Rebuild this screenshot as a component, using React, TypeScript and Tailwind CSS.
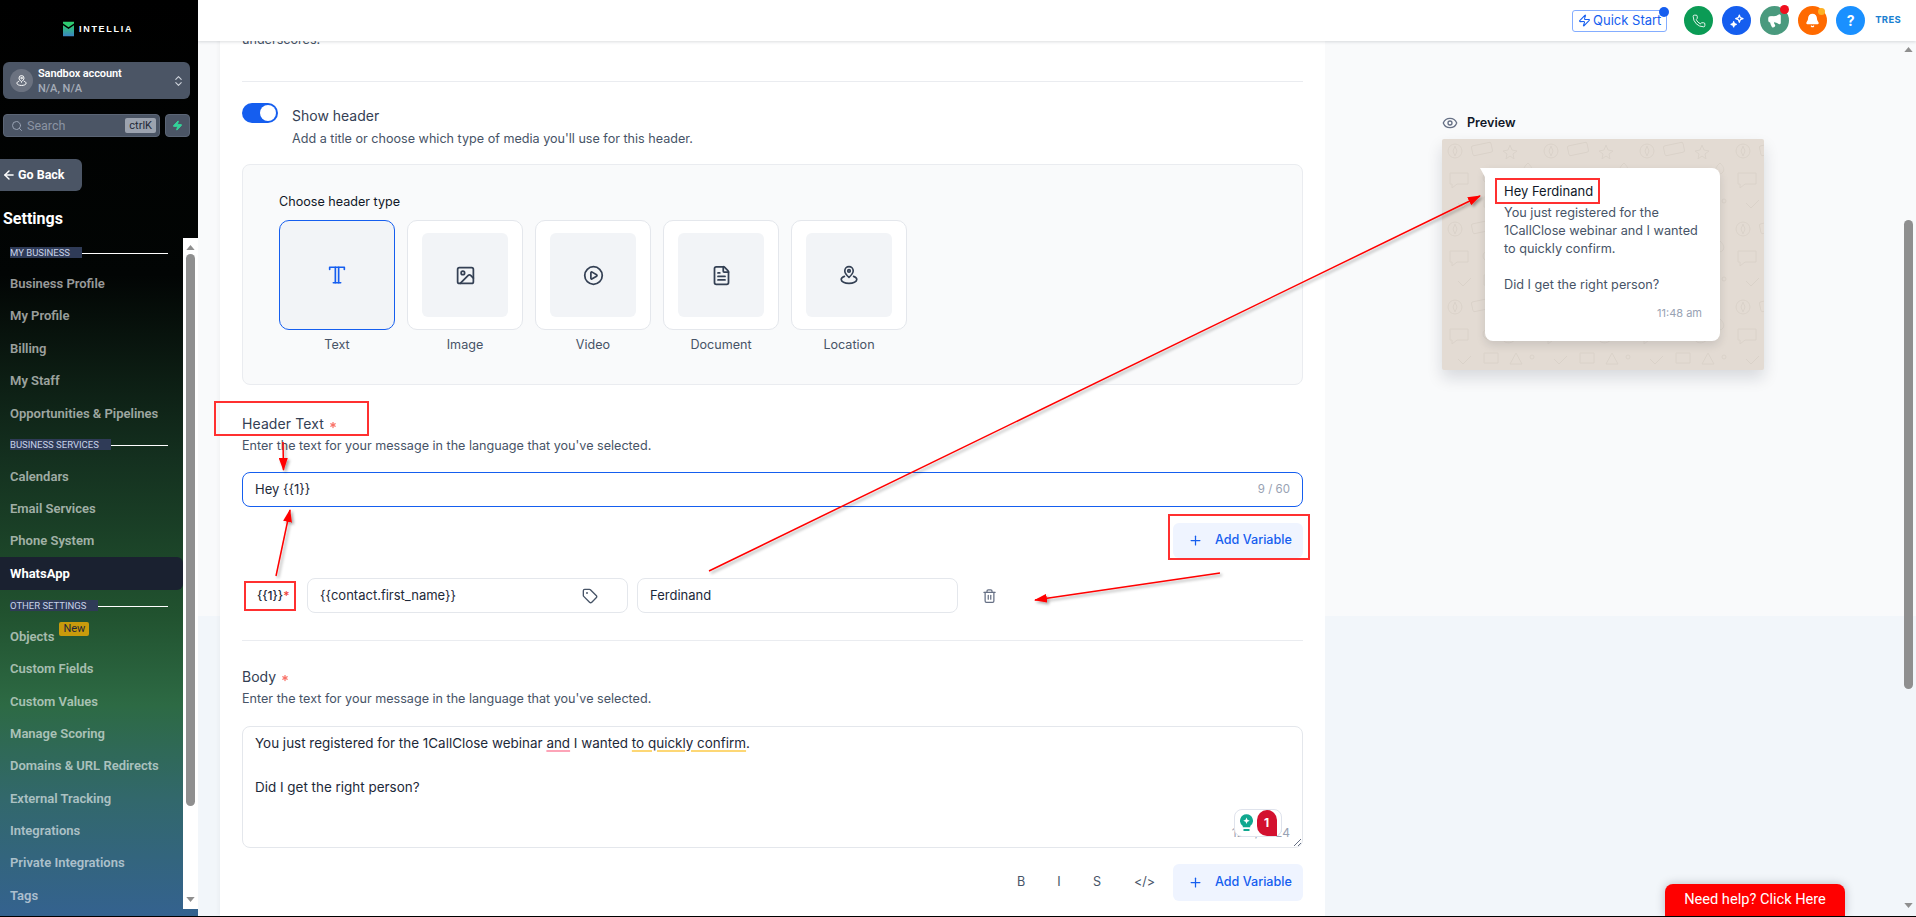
import { ArrowLeft, Asterisk, Bell, ChevronsUpDown, CirclePlay, Eye, FileText, Image, Megaphone, Phone, Plus, Search, Tag, Trash2, Zap } from "lucide-react";

type NavRow = { label: string; section?: boolean; active?: boolean; badge?: string };

const navRows: NavRow[] = [
  { label: "MY BUSINESS", section: true },
  { label: "Business Profile" },
  { label: "My Profile" },
  { label: "Billing" },
  { label: "My Staff" },
  { label: "Opportunities & Pipelines" },
  { label: "BUSINESS SERVICES", section: true },
  { label: "Calendars" },
  { label: "Email Services" },
  { label: "Phone System" },
  { label: "WhatsApp", active: true },
  { label: "OTHER SETTINGS", section: true },
  { label: "Objects", badge: "New" },
  { label: "Custom Fields" },
  { label: "Custom Values" },
  { label: "Manage Scoring" },
  { label: "Domains & URL Redirects" },
  { label: "External Tracking" },
  { label: "Integrations" },
  { label: "Private Integrations" },
  { label: "Tags" },
];

const PinIcon = ({ className }: { className?: string }) => (
  <svg viewBox="0 0 24 24" fill="none" stroke="currentColor" strokeWidth="1.8" strokeLinecap="round" strokeLinejoin="round" className={className}>
    <path d="M12 14.5c-2.6-2.3-4.6-4.4-4.6-7a4.6 4.6 0 0 1 9.2 0c0 2.6-2 4.7-4.6 7z" />
    <circle cx="12" cy="7.5" r="1.4" />
    <path d="M7 13.5c-2.3.8-3.5 2-3.5 3.5 0 2.4 3.8 4.2 8.5 4.2s8.5-1.8 8.5-4.2c0-1.500-1.200-2.700-3.500-3.500" />
  </svg>
);

const TypeIcon = ({ className }: { className?: string }) => (
  <svg viewBox="0 0 24 24" fill="none" stroke="currentColor" strokeWidth="1.8" strokeLinecap="round" strokeLinejoin="round" className={className}>
    <path d="M4 6V3.500h16V6" />
    <path d="M10.200 3.500v17M13.800 3.500v17" />
    <path d="M8 20.500h8" />
  </svg>
);

const TwinStars = ({ className }: { className?: string }) => (
  <svg viewBox="0 0 24 24" fill="none" stroke="currentColor" strokeWidth="1.800" strokeLinejoin="round" className={className}>
    <path d="M15.500 3l1.500 4 4 1.500-4 1.500-1.500 4-1.500-4-4-1.500 4-1.500z" />
    <path d="M7 13l1.100 2.900L11 17l-2.900 1.100L7 21l-1.100-2.900L3 17l2.900-1.100z" fill="currentColor" />
  </svg>
);

const ScrollArrow = ({ down }: { down?: boolean }) => (
  <svg viewBox="0 0 10 6" className="w-[9px] h-[5px]">
    <polygon points={down ? "0,0 10,0 5,6" : "5,0 10,6 0,6"} fill="#8f8f8f" />
  </svg>
);

const Sidebar = () => (
  <aside className="w-[198px] shrink-0 flex flex-col bg-[linear-gradient(180deg,#000000_0%,#020504_30%,#14301f_50%,#21522f_67%,#2d6a44_77%,#32686b_87%,#34628f_100%)] font-['Roboto',sans-serif]">
    <div className="h-[62px] pt-[21px] pl-[63px] flex items-start gap-[5px]">
      <svg viewBox="0 0 12 16" className="w-[11px] h-[16px]">
        <defs>
          <linearGradient id="logoFill" x1="0" y1="0" x2="0" y2="1">
            <stop offset="0" stopColor="#2ecc71" />
            <stop offset="1" stopColor="#3b82c4" />
          </linearGradient>
        </defs>
        <path d="M0 0h12v2L6 6 0 2z" fill="#2ecc71" />
        <path d="M0 4l6 4 6-4v12H0z" fill="url(#logoFill)" />
      </svg>
      <span className="text-[9px] leading-[16px] font-bold tracking-[1.7px] text-white font-['Liberation_Sans',sans-serif]">INTELLIA</span>
    </div>

    <div className="ml-[3px] mr-[8px] h-[37px] rounded-[6px] bg-[#4b5565] flex items-center pl-[7px] pr-[5px]">
      <div className="w-[23px] h-[23px] rounded-full bg-[#6b7280] flex items-center justify-center text-white">
        <PinIcon className="w-[13px] h-[13px]" />
      </div>
      <div className="ml-[5px] flex-1 leading-[15px]">
        <div className="text-[11px] font-semibold text-white tracking-[-0.1px]">Sandbox account</div>
        <div className="text-[11px] font-medium text-[#a5acb8]">N/A, N/A</div>
      </div>
      <ChevronsUpDown className="w-[13px] h-[16px] text-[#d0d5dd]" />
    </div>

    <div className="mt-[15px] mx-[3px] flex gap-[5px]">
      <div className="w-[157px] h-[23px] rounded-[4px] bg-[#4b5565] border border-[#5b6575] flex items-center pl-[7px] pr-[3px]">
        <Search className="w-[12px] h-[12px] text-[#98a2b3]" />
        <span className="ml-[4px] flex-1 text-[12.500px] leading-[19px] -mt-[1px] text-[#8b94a3]">Search</span>
        <span className="h-[15px] px-[4px] rounded-[2px] bg-[#9ca3af] text-[#1f2937] text-[11px] leading-[15px]">ctrlK</span>
      </div>
      <div className="w-[25px] h-[23px] rounded-[4px] bg-[#4b5565] border border-[#5b6575] flex items-center justify-center">
        <Zap className="w-[11px] h-[11px] text-[#34d399] fill-[#34d399]" />
      </div>
    </div>

    <div className="mt-[22px] w-[82px] h-[32px] rounded-r-[6px] bg-[#4b5565] flex items-center pl-[2px] gap-[2px] text-white text-[12.500px] font-bold">
      <ArrowLeft className="w-[14px] h-[14px]" strokeWidth={2.5} />
      Go Back
    </div>

    <div className="mt-[17px] pl-[3px] text-[16px] leading-[22px] font-bold text-white">Settings</div>

    <div className="mt-[7px] flex-1 min-h-0 flex pb-[7px]">
      <nav className="w-[183px] overflow-hidden">
        {navRows.map((row) =>
          row.section ? (
            <div key={row.label} className="h-[30.600px] flex items-center pl-[10px] pr-[15px]">
              <span className="h-[11px] pr-[12px] bg-[#2f3b57] text-[9.500px] leading-[11px] text-[#c7d2e8]">{row.label}</span>
              <span className="flex-1 h-px mt-[2px] bg-white" />
            </div>
          ) : (
            <div
              key={row.label}
              className={
                row.active
                  ? "h-[32.400px] flex items-center pl-[10px] rounded-r-[6px] bg-[#1a2130] text-[13px] font-bold text-white"
                  : "h-[32.400px] flex items-center pl-[10px] text-[13px] font-semibold text-white/60"
              }
            >
              {row.label}
              {row.badge && (
                <span className="ml-[5px] -mt-[14px] h-[14px] px-[4px] rounded-[2px] bg-[#c89b0c] text-[#1f2937] text-[11px] leading-[14px] font-normal">{row.badge}</span>
              )}
            </div>
          ),
        )}
      </nav>
      <div className="w-[15px] mt-[1px] bg-white flex flex-col items-center pt-[7px] pb-[7px]">
        <ScrollArrow />
        <div className="mt-[4px] w-[9px] h-[552px] rounded-full bg-[#8f8f8f]" />
        <div className="flex-1" />
        <ScrollArrow down />
      </div>
    </div>
  </aside>
);

const TopBar = () => (
  <header className="relative z-10 h-[41px] shrink-0 bg-white shadow-[0_1px_3px_rgba(16,24,40,0.15)] flex items-center justify-end pr-[15px]">
    <div className="relative w-[95px] h-[22px] mr-[17px] rounded-[3px] border border-[#84adff] flex items-center justify-center gap-[2px] text-[13px] text-[#155eef]">
      <Zap className="w-[13px] h-[13px]" />
      Quick Start
      <span className="absolute -top-[4px] -right-[3px] w-[10px] h-[10px] rounded-full bg-[#155eef]" />
    </div>
    <div className="flex items-center gap-[9px]">
      <div className="w-[29px] h-[29px] rounded-full bg-[#0b9b55] flex items-center justify-center text-white">
        <Phone className="w-[14px] h-[14px]" strokeWidth={1.5} />
      </div>
      <div className="w-[29px] h-[29px] rounded-full bg-[#155eef] flex items-center justify-center text-white">
        <TwinStars className="w-[16px] h-[16px]" />
      </div>
      <div className="relative w-[29px] h-[29px] rounded-full bg-[#4a9a7e] flex items-center justify-center text-white">
        <Megaphone className="w-[15px] h-[15px] fill-white" />
        <span className="absolute -top-px right-0 w-[9px] h-[9px] rounded-full bg-[#f00f1e]" />
      </div>
      <div className="relative w-[29px] h-[29px] rounded-full bg-[#ff6a00] flex items-center justify-center text-white">
        <Bell className="w-[15px] h-[15px] fill-white" />
        <span className="absolute top-[2px] right-[2px] w-[7px] h-[7px] rounded-full bg-[#fdb022]" />
      </div>
      <div className="w-[29px] h-[29px] rounded-full bg-[#1a90ff] flex items-center justify-center text-white text-[14px] font-bold">?</div>
    </div>
    <span className="ml-[10px] text-[9.500px] font-bold tracking-[0.3px] text-[#1a7fd1]">TRES</span>
  </header>
);

const AddVariable = ({ h }: { h: string }) => (
  <button className={`${h} w-[130px] rounded-[6px] bg-[#eff4ff] flex items-center pl-[15px] text-[12.600px] font-medium text-[#155eef]`}>
    <Plus className="w-[15px] h-[15px] mr-[12px]" />
    Add Variable
  </button>
);

const Required = () => <Asterisk className="inline-block ml-[4px] w-[10px] h-[10px] text-[#f97066]" strokeWidth={3} />;

const tiles = [
  { label: "Text", icon: <TypeIcon className="w-[22px] h-[22px]" />, selected: true },
  { label: "Image", icon: <Image className="w-[21px] h-[21px]" /> },
  { label: "Video", icon: <CirclePlay className="w-[21px] h-[21px]" /> },
  { label: "Document", icon: <FileText className="w-[21px] h-[21px]" /> },
  { label: "Location", icon: <PinIcon className="w-[22px] h-[22px]" /> },
];

const FormCard = () => (
  <section className="w-[1105px] shrink-0 bg-white shadow-[-2px_0_4px_rgba(16,24,40,0.03)] px-[22px] -mt-[11px] text-[12.600px] text-[#475467]">
    <div className="leading-[20px] h-[20px]">underscores.</div>
    <div className="mt-[31px] border-t border-[#eaecf0]" />

    <div className="mt-[21px] flex">
      <div className="w-[36px] h-[20px] rounded-full bg-[#155eef] flex items-center justify-end pr-[2px]">
        <span className="w-[16px] h-[16px] rounded-full bg-white" />
      </div>
      <div className="ml-[14px] mt-[3px] leading-[20px]">
        <div className="text-[14px] text-[#344054]">Show header</div>
        <div className="mt-[3px]">Add a title or choose which type of media you'll use for this header.</div>
      </div>
    </div>

    <div className="mt-[15px] h-[221px] rounded-[8px] border border-[#eaecf0] bg-[#f9fafb] pl-[36px] pt-[27px]">
      <div className="leading-[20px] text-[#101828]">Choose header type</div>
      <div className="mt-[8px] flex gap-[12px]">
        {tiles.map((t) => (
          <div key={t.label} className="w-[116px]">
            <div
              className={
                t.selected
                  ? "h-[110px] rounded-[10px] border border-[#155eef] bg-[#f2f4f7] flex items-center justify-center text-[#155eef]"
                  : "h-[110px] p-[12px_14px] rounded-[10px] border border-[#e4e7ec] bg-white"
              }
            >
              {t.selected ? (
                t.icon
              ) : (
                <div className="h-full rounded-[6px] bg-[#f2f4f7] flex items-center justify-center text-[#344054]">{t.icon}</div>
              )}
            </div>
            <div className="mt-[5px] leading-[20px] text-center">{t.label}</div>
          </div>
        ))}
      </div>
    </div>

    <div className="mt-[29px] leading-[20px] text-[14px] tracking-[0.1px] text-[#344054]">
      Header Text
      <Required />
    </div>
    <div className="mt-[2px] leading-[20px]">Enter the text for your message in the language that you've selected.</div>
    <div className="mt-[16px] h-[35px] rounded-[8px] border border-[#155eef] px-[12px] flex items-center justify-between text-[13px] text-[#1d2939]">
      <span>Hey {"{{1}}"}</span>
      <span className="text-[11.500px] text-[#98a2b3]">9 / 60</span>
    </div>
    <div className="mt-[16px] flex justify-end">
      <AddVariable h="h-[35px]" />
    </div>

    <div className="mt-[20px] flex items-center text-[13px] text-[#1d2939]">
      <div className="w-[65px] pl-[15px] text-[12px] font-medium">
        {"{{1}}"}
        <span className="text-[#f04438]">*</span>
      </div>
      <div className="w-[321px] h-[35px] rounded-[8px] border border-[#e4e7ec] pl-[12px] pr-[29px] flex items-center justify-between">
        {"{{contact.first_name}}"}
        <Tag className="w-[16px] h-[16px] text-[#475467]" />
      </div>
      <div className="ml-[9px] w-[321px] h-[35px] rounded-[8px] border border-[#e4e7ec] pl-[12px] flex items-center">Ferdinand</div>
      <Trash2 className="ml-[24px] w-[15px] h-[16px] text-[#667085]" />
    </div>
    <div className="mt-[27px] border-t border-[#eaecf0]" />

    <div className="mt-[26px] leading-[20px] text-[14px] text-[#344054]">
      Body
      <Required />
    </div>
    <div className="mt-[2px] leading-[20px]">Enter the text for your message in the language that you've selected.</div>
    <div className="relative mt-[17px] h-[122px] rounded-[8px] border border-[#e4e7ec] px-[12px] pt-[5px] leading-[22px] text-[13.450px] text-[#1d2939]">
      <div>
        You just registered for the 1CallClose webinar{" "}
        <span className="underline decoration-[#fda4b8] decoration-2 underline-offset-2">and</span> I wanted{" "}
        <span className="underline decoration-[#fdd775] decoration-2 underline-offset-2">to quickly confirm</span>.
      </div>
      <div className="mt-[22px]">Did I get the right person?</div>
      <span className="absolute right-[12px] bottom-[6px] text-[12px] leading-[16px] text-[#98a2b3]">124 / 1024</span>
      <div className="absolute right-[20px] bottom-[10px] w-[48px] h-[28px] rounded-[8px] border border-[#dfe3ec] bg-white flex items-center justify-center gap-[4px]">
        <svg viewBox="0 0 14 20" className="w-[13px] h-[19px]">
          <path d="M7 0a7 7 0 0 1 4 12.700V14H3v-1.300A7 7 0 0 1 7 0z" fill="#10a88f" />
          <path d="M7 3.500l1 2.500 2.500 1-2.500 1-1 2.500-1-2.500-2.500-1 2.500-1z" fill="#fff" />
          <rect x="3.500" y="16" width="7" height="2" rx="1" fill="#10a88f" />
        </svg>
        <span className="w-[20px] h-[26px] rounded-[10px_10px_0_10px] bg-[#d3112f] text-white text-[12px] font-bold flex items-center justify-center">1</span>
      </div>
      <svg viewBox="0 0 8 8" className="absolute right-[1px] bottom-[1px] w-[8px] h-[8px]">
        <path d="M1 8L8 1M5 8l3-3" stroke="#667085" strokeWidth="1" />
      </svg>
    </div>
    <div className="mt-[16px] flex justify-end items-center text-[#475467]">
      <span className="w-[38px] text-center">B</span>
      <span className="w-[38px] text-center">I</span>
      <span className="w-[38px] text-center">S</span>
      <span className="w-[57px] text-center">{"</>"}</span>
      <AddVariable h="h-[37px]" />
    </div>
  </section>
);

const Doodles = () => (
  <svg className="absolute inset-0 w-full h-full" aria-hidden="true">
    <defs>
      <pattern id="wa" width="96" height="78" patternUnits="userSpaceOnUse">
        <g fill="none" stroke="#dad2c9" strokeWidth="1">
          <circle cx="13" cy="12" r="7" />
          <path d="M13 7l2 5-2 5-2-5z" />
          <rect x="30" y="5" width="20" height="10" rx="2" transform="rotate(-12 40 10)" />
          <path d="M68 6l2 5 5 1-4 3 1 5-4-3-4 3 1-5-4-3 5-1z" />
          <path d="M8 34h18v11H15l-5 4v-4H8z" />
          <circle cx="46" cy="39" r="5" />
          <path d="M66 33c7 0 10 5 8 10s-10 7-13 2 0-12 5-12z" />
          <path d="M86 24c3 3 5 6 3 9s-6 2-7-1 1-5 4-8z" />
          <path d="M16 64l5 5 8-8M42 58h14v10H42zM74 58l6 11H68z" />
          <circle cx="90" cy="62" r="2" />
        </g>
      </pattern>
    </defs>
    <rect width="100%" height="100%" fill="url(#wa)" />
  </svg>
);

const PreviewPanel = () => (
  <section className="flex-1 pl-[117px] pt-[72px]">
    <div className="flex items-center gap-[9px] h-[20px] text-[12.600px] font-semibold text-[#101828]">
      <Eye className="w-[16px] h-[16px] text-[#667085]" />
      Preview
    </div>
    <div className="relative mt-[6px] w-[322px] h-[231px] rounded-[2px] bg-[#e3dbd3] shadow-[0_8px_16px_rgba(16,24,40,0.14)] pl-[43px] pt-[29px]">
      <Doodles />
      <div className="relative w-[235px] h-[173px] rounded-[8px] rounded-tl-none bg-white shadow-[0_4px_10px_rgba(16,24,40,0.12)] pl-[19px] pr-[12px] pt-[14px] text-[12.700px] leading-[18px] text-[#475467]">
        <span className="absolute -left-[5px] top-0 w-0 h-0 border-t-[9px] border-l-[5px] border-t-white border-l-transparent" />
        <div className="text-[13px] text-[#101828]">Hey Ferdinand</div>
        <div className="mt-[4px]">You just registered for the 1CallClose webinar and I wanted to quickly confirm.</div>
        <div className="mt-[18px]">Did I get the right person?</div>
        <div className="mt-[10px] pr-[6px] text-right text-[11px] text-[#98a2b3]">11:48 am</div>
      </div>
    </div>
  </section>
);

const PageScrollbar = () => (
  <div className="w-[16px] shrink-0 flex flex-col items-center pt-[6px] pb-[8px]">
    <ScrollArrow />
    <div className="mt-[168px] w-[9px] h-[469px] rounded-full bg-[#8f8f8f]" />
    <div className="flex-1" />
    <ScrollArrow down />
  </div>
);

// red markup drawn on the screenshot, sits on top of the whole page
const Annotations = () => (
  <svg className="absolute inset-0 z-20 w-full h-full pointer-events-none" aria-hidden="true">
    <defs>
      <marker id="head" markerUnits="userSpaceOnUse" markerWidth="13" markerHeight="9" refX="12" refY="4.500" orient="auto">
        <polygon points="0,0 13,4.500 0,9" fill="#f00" />
      </marker>
      <filter id="soft" x="-10%" y="-10%" width="120%" height="120%">
        <feDropShadow dx="2" dy="2" stdDeviation="1.500" floodColor="#000" floodOpacity="0.35" />
      </filter>
    </defs>
    <g fill="none" stroke="#ff3030" strokeWidth="2">
      <rect x="215" y="402" width="153" height="33" />
      <rect x="245" y="582" width="50" height="28" />
      <rect x="1496" y="179" width="103" height="24" />
      <rect x="1169" y="515" width="140" height="44" />
    </g>
    <g stroke="#f00" strokeWidth="1.500" filter="url(#soft)">
      <line x1="283" y1="442" x2="283.500" y2="470" markerEnd="url(#head)" />
      <line x1="276" y1="576" x2="290" y2="510" markerEnd="url(#head)" />
      <line x1="709" y1="571" x2="1480" y2="196" markerEnd="url(#head)" />
      <line x1="1220" y1="573" x2="1035" y2="600" markerEnd="url(#head)" />
    </g>
  </svg>
);

export default function App() {
  return (
    <div className="relative w-[1916px] h-[917px] overflow-hidden border-b border-black flex bg-white font-['Inter',sans-serif]">
      <Sidebar />
      <main className="flex-1 min-w-0 flex flex-col">
        <TopBar />
        <div className="flex-1 min-h-0 flex overflow-hidden bg-[linear-gradient(180deg,#f9fafb_0,#f9fafb_575px,#f2f6fa_575px)]">
          <div className="w-[22px] shrink-0" />
          <FormCard />
          <PreviewPanel />
          <PageScrollbar />
        </div>
      </main>
      <div className="absolute left-[1665px] bottom-0 w-[180px] h-[32px] rounded-t-[8px] bg-[#ff0000] shadow-[0_0_10px_rgba(16,24,40,0.25)] flex items-center justify-center text-[14.600px] text-white font-['Roboto',sans-serif]">
        Need help? Click Here
      </div>
      <Annotations />
    </div>
  );
}
